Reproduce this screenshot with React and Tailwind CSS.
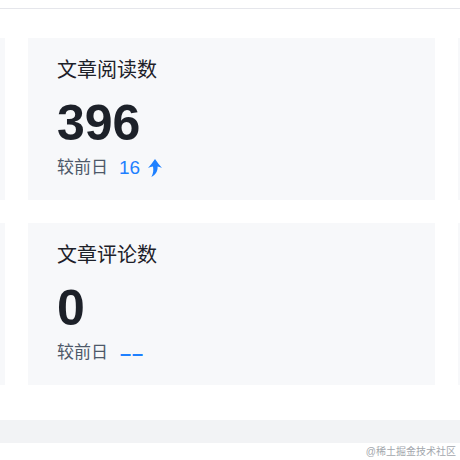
import React from 'react';

const font = { fontFamily: '"Liberation Sans", "Noto Sans CJK SC", sans-serif' };

function ArrowRise() {
  return (
    <svg width="14" height="18" viewBox="0 0 14 18" className="ml-[8px]">
      <path
        d="M7 0 Q10 4.5 14 9 Q11.5 7.8 9.6 7.6 C9.8 12.4 8 15.6 3.4 18 C5.4 14.6 5.6 11.2 5 7.6 Q2.6 7.8 0 9 Q4 4.5 7 0 Z"
        fill="#1e80ff"
      />
    </svg>
  );
}

function StatCard({ title, value, delta, up }) {
  return (
    <div className="h-[162px] bg-[#f7f8fa] pl-[29px] pt-[18px]">
      <div className="text-[20px] leading-[28px] text-[#1d2129]">{title}</div>
      <div className="mt-[14px] text-[50px] leading-[50px] font-bold text-[#1d2129]">{value}</div>
      <div className="mt-[8px] flex items-center h-[24px]">
        <span className="text-[17px] text-[#4e5969]">较前日</span>
        {delta !== null ? (
          <>
            <span className="ml-[11px] text-[19px] text-[#1e80ff]">{delta}</span>
            {up && <ArrowRise />}
          </>
        ) : (
          <span className="ml-[12px] text-[20px] font-bold text-[#1e80ff] tracking-[1px]">––</span>
        )}
      </div>
    </div>
  );
}

function Blank() {
  return <div className="h-[162px] bg-[#f7f8fa]" />;
}

export default function App() {
  return (
    <div className="w-[460px] h-[460px] bg-white overflow-hidden" style={font}>
      <div className="h-2" />
      <div className="h-px bg-[#e5e6eb]" />
      <div className="mt-[29px] ml-[-402px] grid grid-cols-[407px_407px_407px] gap-[23px]">
        <Blank />
        <StatCard title="文章阅读数" value="396" delta="16" up />
        <Blank />
        <Blank />
        <StatCard title="文章评论数" value="0" delta={null} />
        <Blank />
      </div>
      <div className="mt-[35px] h-[23px] bg-[#f2f3f5]" />
      <div className="flex justify-end pr-[4px] h-[16px] items-center text-[10px] text-[#a3a7ad]">
        @稀土掘金技术社区
      </div>
    </div>
  );
}
